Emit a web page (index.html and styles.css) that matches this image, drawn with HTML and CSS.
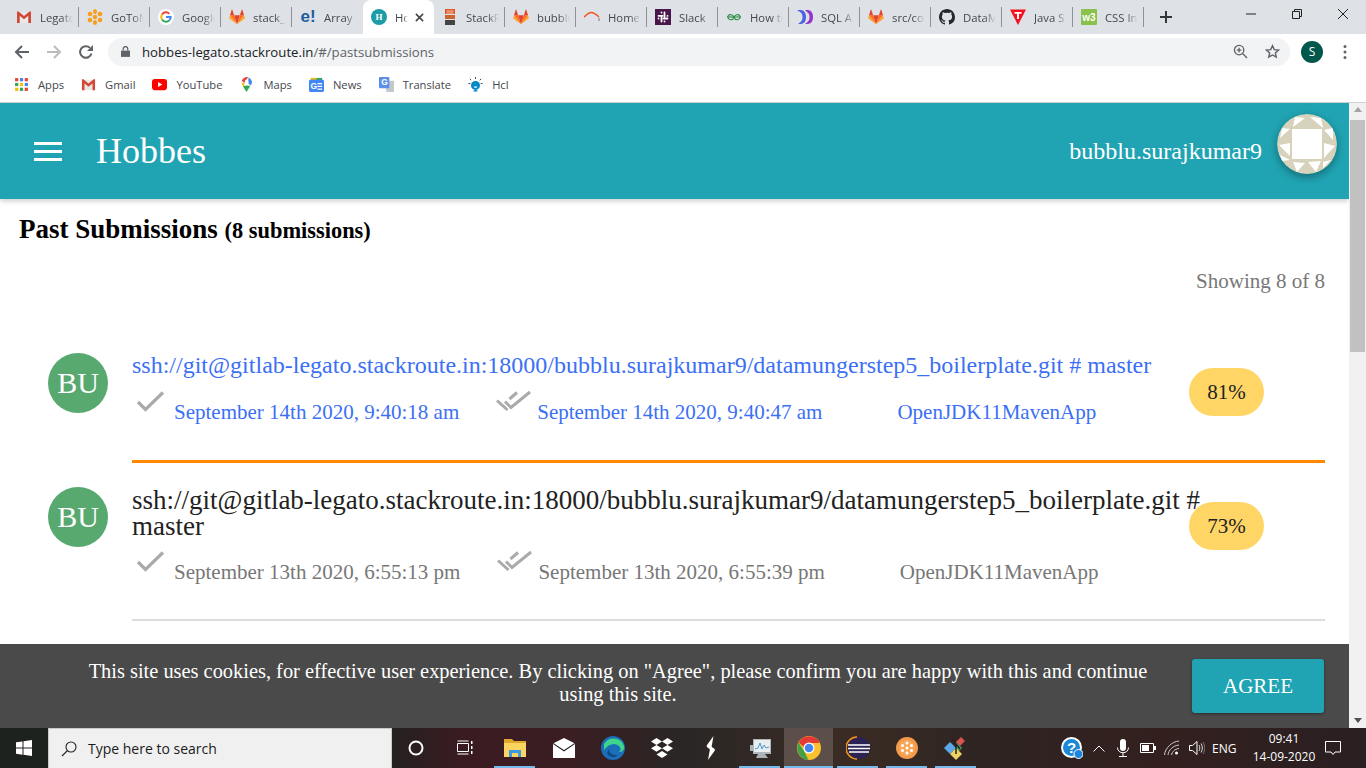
FILE: index.html
```html
<!DOCTYPE html>
<html lang="en">
<head>
<meta charset="utf-8">
<title>Hobbes</title>
<link rel="stylesheet" href="styles.css">
</head>
<body>
<svg class="defs" aria-hidden="true">
  <symbol id="fox" viewBox="0 0 16 16">
    <path fill="#e24329" d="M8 15.2 10.9 6.2H5.1z"/>
    <path fill="#fc6d26" d="M8 15.2 5.1 6.2H1z"/>
    <path fill="#fca326" d="M1 6.2.2 8.9c-.1.3 0 .5.2.7L8 15.2z"/>
    <path fill="#e24329" d="M1 6.2h4.1L3.3.8c-.1-.3-.5-.3-.6 0z"/>
    <path fill="#fc6d26" d="M8 15.2 10.9 6.2H15z"/>
    <path fill="#fca326" d="M15 6.2l.8 2.7c.1.3 0 .5-.2.7L8 15.2z"/>
    <path fill="#e24329" d="M15 6.2h-4.1L12.7.8c.1-.3.5-.3.6 0z"/>
  </symbol>
  <symbol id="gmail" viewBox="0 0 16 16">
    <path fill="#e8e8e8" d="M1 3h14v11H1z"/>
    <path fill="#d14836" d="M1 2.500h1.500L8 7l5.500-4.500H15V14h-2.700V6.800L8 10.300 3.700 6.800V14H1z"/>
  </symbol>
  <symbol id="check" viewBox="0 0 30 24">
    <path fill="none" stroke="#aaa" stroke-width="3.200" d="M3 12 10.500 19.500 28 2.500"/>
  </symbol>
  <symbol id="dcheck" viewBox="0 0 36 24">
    <path fill="none" stroke="#aaa" stroke-width="3" d="M1 10.500 11.500 20M9 11.500l6 6L34 2M13.500 9l7.500-6.500"/>
  </symbol>
</svg>

<div class="tabstrip">
  <div class="tab"><svg class="fav"><use href="#gmail"/></svg><span class="tabname">Legato</span></div>
  <div class="tab">
    <svg class="fav" viewBox="0 0 16 16"><g fill="#f99d1c"><circle cx="8" cy="8" r="2.200"/><ellipse cx="8" cy="2.500" rx="2" ry="2.500"/><ellipse cx="8" cy="13.500" rx="2" ry="2.500"/><circle cx="3" cy="5" r="2.300"/><circle cx="13" cy="5" r="2.300"/><circle cx="3" cy="11" r="2.300"/><circle cx="13" cy="11" r="2.300"/></g></svg>
    <span class="tabname">GoToMeeting</span></div>
  <div class="tab">
    <svg class="fav" viewBox="0 0 16 16"><circle cx="8" cy="8" r="8" fill="#fff"/><path fill="none" stroke="#ea4335" stroke-width="2" d="M11.300 4.700A4.700 4.700 0 0 0 4 5.500"/><path fill="none" stroke="#fbbc05" stroke-width="2" d="M4 5.500a4.700 4.700 0 0 0 0 5"/><path fill="none" stroke="#34a853" stroke-width="2" d="M4 10.500a4.700 4.700 0 0 0 7.300.9"/><path fill="none" stroke="#4285f4" stroke-width="2" d="M11.300 11.400A4.700 4.700 0 0 0 12.700 8H8"/></svg>
    <span class="tabname">Google</span></div>
  <div class="tab"><svg class="fav"><use href="#fox"/></svg><span class="tabname">stack_route</span></div>
  <div class="tab"><span class="fav favtext favE">e!</span><span class="tabname">Array</span></div>
  <div class="tab tab-active"><span class="fav favtext favH">H</span><span class="tabname tabshort">Hobbes</span>
    <svg class="tabx" viewBox="0 0 10 10"><path stroke="#45484d" stroke-width="1.800" d="M1 1l8 8M9 1 1 9"/></svg></div>
  <div class="tab">
    <svg class="fav" viewBox="0 0 16 16"><path fill="#e2552b" d="M3 0h10v5H3z"/><path fill="#f2c9a8" d="M4.500 1.500h7v1h-7zM4.500 3.500h7v1h-7z"/><path fill="#c9652f" d="M3 6h10v4H3z"/><path fill="#444" d="M3 11h10v5H3z"/></svg>
    <span class="tabname">StackRoute</span></div>
  <div class="tab"><svg class="fav"><use href="#fox"/></svg><span class="tabname">bubblu</span></div>
  <div class="tab">
    <svg class="fav" viewBox="0 0 16 16"><path fill="none" stroke="#f4511e" stroke-width="1.400" d="M0 8C2 7 3.500 3.500 7 3.500S13 6 15 8"/><path fill="none" stroke="#888" stroke-width="1.200" d="M15 9v3"/></svg>
    <span class="tabname">Home</span></div>
  <div class="tab">
    <svg class="fav" viewBox="0 0 16 16"><rect width="16" height="16" fill="#4a154b"/><g stroke="#fff" stroke-width="1.800" stroke-linecap="round"><path d="M3.500 6.800h4M6.500 3.500v.1M9.500 3.500v4M12.500 6.800v.1M8.500 9.500h4M9.500 12.500v.1M6.500 8.500v4M3.500 9.500v.1"/></g></svg>
    <span class="tabname">Slack</span></div>
  <div class="tab">
    <svg class="fav" viewBox="0 0 16 16"><g fill="none" stroke="#2f8d46" stroke-width="1.100"><path d="M1 8h14"/><path d="M7.800 8C7 5.500 3.500 5 2.300 6.500S2.500 11 5 10.800 7.500 9.500 7.800 8"/><path d="M8.200 8C9 5.500 12.500 5 13.700 6.500S13.500 11 11 10.800 8.500 9.500 8.200 8"/></g></svg>
    <span class="tabname">How to</span></div>
  <div class="tab">
    <svg class="fav" viewBox="0 0 16 16"><path fill="#4b63e0" d="M0 1h3.500C8 1 9 5 9 8s-1 7-5.500 7H1l2.500-2C5 12 5.500 10 5.500 8S5 4 3 3z"/><path fill="#9333c9" d="M8 1h2.500C15 1 16 5 16 8s-1 7-5.500 7H8l2.500-2c1.500-1 2-3 2-5s-.5-4-2.500-5z"/></svg>
    <span class="tabname">SQL A</span></div>
  <div class="tab"><svg class="fav"><use href="#fox"/></svg><span class="tabname">src/com</span></div>
  <div class="tab">
    <svg class="fav" viewBox="0 0 16 16"><path fill="#24292e" d="M8 0C3.600 0 0 3.600 0 8c0 3.500 2.300 6.500 5.500 7.600.4.100.5-.2.500-.4v-1.400c-2.200.5-2.700-1-2.700-1-.4-.9-.9-1.200-.9-1.200-.7-.5.100-.5.100-.5.800.1 1.200.8 1.200.8.700 1.200 1.900.9 2.300.7.100-.5.300-.9.500-1.100-1.800-.2-3.600-.9-3.600-4 0-.9.300-1.600.8-2.100-.1-.2-.4-1 .1-2.100 0 0 .7-.2 2.200.8a7.600 7.600 0 0 1 4 0c1.500-1 2.200-.8 2.200-.8.400 1.100.2 1.900.1 2.100.5.600.8 1.300.8 2.100 0 3.100-1.900 3.700-3.700 3.900.3.300.6.800.6 1.500v2.200c0 .2.100.5.600.4A8 8 0 0 0 16 8c0-4.400-3.600-8-8-8z"/></svg>
    <span class="tabname">DataM</span></div>
  <div class="tab">
    <svg class="fav" viewBox="0 0 16 16"><path fill="#f4101c" d="M0 .5h16L8 16z"/><path fill="#fff" d="M4.500 3h7v1.800H9V10H7V4.800H4.500z"/></svg>
    <span class="tabname">Java S</span></div>
  <div class="tab"><span class="fav favtext favW">w3</span><span class="tabname">CSS In</span></div>
  <svg class="newtab" viewBox="0 0 12 12"><path stroke="#35363a" stroke-width="2" d="M6 0v12M0 6h12"/></svg>
  <div class="winbtns">
    <svg class="winbtn" viewBox="0 0 12 12"><path stroke="#222" d="M1 6h10"/></svg>
    <svg class="winbtn" viewBox="0 0 12 12"><path fill="none" stroke="#222" d="M1.500 3.500h7v7h-7zM3.500 3.500v-2h7v7h-2"/></svg>
    <svg class="winbtn" viewBox="0 0 12 12"><path stroke="#222" d="M1 1l10 10M11 1 1 11"/></svg>
  </div>
</div>

<div class="toolbar">
  <svg class="navbtn" viewBox="0 0 16 16"><path fill="none" stroke="#5f6368" stroke-width="2" d="M15 8H2M8 2 2 8l6 6"/></svg>
  <svg class="navbtn" viewBox="0 0 16 16"><path fill="none" stroke="#babcbe" stroke-width="2" d="M1 8h13M8 2l6 6-6 6"/></svg>
  <svg class="navbtn" viewBox="0 0 16 16"><path fill="none" stroke="#5f6368" stroke-width="2" d="M13.500 9.500A5.800 5.800 0 1 1 12 3.900"/><path fill="#5f6368" d="M15 1v6H9z"/></svg>
  <div class="omnibox">
    <svg class="lock" viewBox="0 0 10 12"><path fill="#5f6368" d="M0 5h10v7H0z"/><path fill="none" stroke="#5f6368" stroke-width="1.400" d="M2.500 5V3a2.500 2.500 0 0 1 5 0v2"/></svg>
    <span class="url">hobbes-legato.stackroute.in<span class="urlpath">/#/pastsubmissions</span></span>
    <svg class="omniicon zoomicon" viewBox="0 0 16 16"><g fill="none" stroke="#5f6368" stroke-width="1.400"><circle cx="6.500" cy="6.500" r="5"/><path d="M10.200 10.200 15 15M6.500 4v5M4 6.500h5"/></g></svg>
    <svg class="omniicon" viewBox="0 0 16 16"><path fill="none" stroke="#5f6368" stroke-width="1.500" d="M8 1.800l1.900 4.200 4.500.5-3.400 3 1 4.500-4-2.300-4 2.300 1-4.500-3.400-3 4.500-.5z"/></svg>
  </div>
  <span class="profile">S</span>
  <svg class="kebab" viewBox="0 0 4 16"><g fill="#5f6368"><circle cx="2" cy="2.500" r="1.500"/><circle cx="2" cy="8" r="1.500"/><circle cx="2" cy="13.500" r="1.500"/></g></svg>
</div>

<div class="bookmarks">
  <span class="bm bm-apps">
    <svg class="bmicon" viewBox="0 0 14 14"><g><path fill="#ea4335" d="M1 1h3v3H1z"/><path fill="#4285f4" d="M5.500 1h3v3h-3z"/><path fill="#ea4335" d="M10 1h3v3h-3z"/><path fill="#34a853" d="M1 5.500h3v3H1z"/><path fill="#fbbc05" d="M5.500 5.500h3v3h-3z"/><path fill="#4285f4" d="M10 5.500h3v3h-3z"/><path fill="#fbbc05" d="M1 10h3v3H1z"/><path fill="#34a853" d="M5.500 10h3v3h-3z"/><path fill="#ea4335" d="M10 10h3v3h-3z"/></g></svg>Apps</span>
  <span class="bm"><svg class="bmicon"><use href="#gmail"/></svg>Gmail</span>
  <span class="bm"><svg class="bmicon" viewBox="0 0 16 16"><rect y="2" width="16" height="12" rx="3" fill="#f00"/><path fill="#fff" d="M6.500 5.300 11 8l-4.500 2.700z"/></svg>YouTube</span>
  <span class="bm"><svg class="bmicon" viewBox="0 0 16 16"><path fill="#34a853" d="M8 16 4 9.500 9 9l3 .5z"/><path fill="#fbbc05" d="M3.500 8.500C3 7.500 2.800 7 2.800 6L6 7l-1 3z"/><path fill="#ea4335" d="M3 4a5.300 5.300 0 0 1 7-3.500L6.500 4 6 7z"/><path fill="#4285f4" d="M10 .5A5.300 5.300 0 0 1 12.500 9L10 7z"/><circle cx="8" cy="5.500" r="2" fill="#fff"/></svg>Maps</span>
  <span class="bm"><svg class="bmicon" viewBox="0 0 16 16"><path fill="#34a853" d="M2 1h12v4H2z"/><path fill="#fbbc05" d="M2 1h6v2H2z"/><rect y="3" width="16" height="13" rx="1.500" fill="#4285f4"/><path stroke="#fff" stroke-width="1.300" d="M9 7h5M9 10h5M9 13h5"/><text class="gnews" x="1.500" y="12.500">G</text></svg>News</span>
  <span class="bm"><svg class="bmicon" viewBox="0 0 16 16"><path fill="#c4c7cc" d="M6 4h10v12H8z"/><rect width="11" height="12" rx="1" fill="#5c8fea"/><text class="gnews" x="2.500" y="9">G</text></svg>Translate</span>
  <span class="bm"><svg class="bmicon" viewBox="0 0 16 16"><circle cx="8" cy="9" r="4.800" fill="#0288c9"/><path fill="#fff" d="M6 10h4l-.8 1.500H6.800z"/><path fill="#0288c9" d="M6 14h4v1.500H6z"/><path stroke="#333" stroke-dasharray="2 1" d="M8 0v2.500M2 2l2 2M14 2l-2 2M.5 7H2.500M13.500 7h2"/></svg>Hcl</span>
</div>

<div class="viewport">
  <main class="page">
    <header class="appbar">
      <div class="burger"><i></i><i></i><i></i></div>
      <span class="brand">Hobbes</span>
      <span class="username">bubblu.surajkumar9</span>
      <svg class="useravatar" viewBox="0 0 60 60">
        <circle cx="30" cy="30" r="30" fill="#d6d2bb"/>
        <g fill="#fff">
          <path d="M18 3 28 4 16 13zM33 3 44 4 46 14zM5 14 13 15 3 24zM47 16 56 14 56 26z"/>
          <path d="M2 31 13 29 13 42zM47 29 58 32 47 44zM3 41 13 46 5 47zM16 48 28 49 20 58z"/>
          <path d="M31 48 44 47 39 58zM46 48 54 46 46 54zM15 15h30v30H15z"/>
        </g>
      </svg>
    </header>
    <section class="content">
      <h1 class="heading">Past Submissions <small class="count">(8 submissions)</small></h1>
      <p class="showing">Showing 8 of 8</p>
      <article class="sub sub-first">
        <span class="avatar">BU</span>
        <div class="subbody">
          <div class="subtitle">ssh://git@gitlab-legato.stackroute.in:18000/bubblu.surajkumar9/datamungerstep5_boilerplate.git # master</div>
          <div class="meta">
            <svg class="ic-check"><use href="#check"/></svg><span class="date">September 14th 2020, 9:40:18 am</span>
            <svg class="ic-dcheck"><use href="#dcheck"/></svg><span class="date date2">September 14th 2020, 9:40:47 am</span>
            <span class="runner">OpenJDK11MavenApp</span>
          </div>
        </div>
        <span class="score">81%</span>
      </article>
      <article class="sub sub-second">
        <span class="avatar">BU</span>
        <div class="subbody">
          <div class="subtitle">ssh://git@gitlab-legato.stackroute.in:18000/bubblu.surajkumar9/datamungerstep5_boilerplate.git # master</div>
          <div class="meta">
            <svg class="ic-check"><use href="#check"/></svg><span class="date">September 13th 2020, 6:55:13 pm</span>
            <svg class="ic-dcheck"><use href="#dcheck"/></svg><span class="date date2">September 13th 2020, 6:55:39 pm</span>
            <span class="runner">OpenJDK11MavenApp</span>
          </div>
        </div>
        <span class="score">73%</span>
      </article>
    </section>
  </main>
  <div class="scrollbar">
    <span class="arrow arrow-up"></span>
    <span class="thumb"></span>
    <span class="arrow arrow-down"></span>
  </div>
  <div class="cookie">
    <p class="cookietext">This site uses cookies, for effective user experience. By clicking on "Agree", please confirm you are happy with this and continue using this site.</p>
    <button class="agree">AGREE</button>
  </div>
</div>

<footer class="taskbar">
  <span class="tb tb-start"><svg viewBox="0 0 16 16" class="win"><path fill="#fff" d="M0 2.300 6.500 1.400v6.200H0zM7.500 1.200 16 0v7.600H7.500zM0 8.500h6.500v6.200L0 13.800zM7.500 8.500H16V16l-8.500-1.200z"/></svg></span>
  <div class="search">
    <svg class="searchicon" viewBox="0 0 16 16"><g fill="none" stroke="#222" stroke-width="1.100"><circle cx="10" cy="6" r="5"/><path d="M6.500 9.500 1 15"/></g></svg>
    <span class="searchtext">Type here to search</span>
  </div>
  <div class="tbicons">
    <span class="tb"><svg class="tbi16" viewBox="0 0 16 16"><circle cx="8" cy="8" r="6.500" fill="none" stroke="#fff" stroke-width="2"/></svg></span>
    <span class="tb tb-wide"><svg class="tbi16" viewBox="0 0 16 16"><path fill="none" stroke="#fff" d="M.5 3.500h11v8H.5zM.5 1h11M.5 14h11"/><path fill="#fff" d="M14 1h1.500v3H14zM14 6h1.500v3H14zM14 11h1.500v3H14z"/></svg></span>
    <span class="tb tb-open"><svg class="tbi22" viewBox="0 0 22 22"><path fill="#e0a92e" d="M0 2h8l2 2h12v16H0z"/><path fill="#fcd462" d="M0 6h22v14H0z"/><path fill="#3d9ae0" d="M5 13h12v7h-3v-4H8v4H5z"/></svg></span>
    <span class="tb"><svg class="tbi22" viewBox="0 0 24 22"><path fill="#fff" d="M0 6 12 0l12 6v16H0z"/><path fill="none" stroke="#2b2023" stroke-width="1.200" d="M0 6l12 8 12-8"/></svg></span>
    <span class="tb"><svg class="tbi24" viewBox="0 0 24 24"><circle cx="12" cy="12" r="12" fill="#1b6fb9"/><path fill="#3fd48c" d="M3 8a11 11 0 0 1 20 2c1 4-2 6-5 6 3-2 2-7-5-8-4 0-7 2-10 6z"/><path fill="#0c4a8a" d="M8 13c0 4 4 7 9 6-3 3-9 3-11-2z"/></svg></span>
    <span class="tb"><svg class="tbi22" viewBox="0 0 24 22"><path fill="#fff" d="M6 0l6 3.800L6 7.600 0 3.800zM18 0l6 3.800-6 3.800-6-3.800zM0 11.400l6-3.800 6 3.800-6 3.800zM12 11.400l6-3.800 6 3.800-6 3.800zM6 18.200l6-3.800 6 3.800L12 22z"/></svg></span>
    <span class="tb"><svg class="tbi24" viewBox="0 0 12 24"><path fill="#fff" d="M8.500 0 2 9c-1 1.500 0 2.300 2 3.500 1 .8 1 1.500.5 3L3 24l6.500-9c1-1.500 0-2.500-2-3.500-1-.8-1-1.500-.5-3z"/></svg></span>
    <span class="tb tb-open"><svg class="tbi24" viewBox="0 0 24 24"><path fill="#aeb6ba" d="M5 3h18v15H5z"/><path fill="#e8eef0" d="M6 4h16v12H6z"/><path fill="none" stroke="#4f97c9" d="M7 13l3-1 2-5 2 6 2-4 2 3 3-1"/><path fill="#a9b1b5" d="M2 9h3v6H2zM10 18h7l3 4H8z"/></svg></span>
    <span class="tb tb-open tb-active"><svg class="tbi24" viewBox="0 0 24 24"><circle cx="12" cy="12" r="12" fill="#fbc02d"/><path fill="#e53935" d="M1.600 6.500A12 12 0 0 1 22.800 7H12a5 5 0 0 0-5 4z"/><path fill="#43a047" d="M1.600 6.500 7 15l4.500 9A12 12 0 0 1 1.600 6.500z"/><circle cx="12" cy="12" r="5.500" fill="#fff"/><circle cx="12" cy="12" r="4.300" fill="#4285f4"/></svg></span>
    <span class="tb tb-open"><svg class="tbi24" viewBox="0 0 24 24"><circle cx="13" cy="12" r="11" fill="#2c2255"/><path fill="none" stroke="#f7941e" stroke-width="1.500" d="M11 1A11 11 0 0 0 11 23"/><path stroke="#fff" stroke-width="1.700" d="M2 9h22M2 12.500h22M3 16h20"/></svg></span>
    <span class="tb tb-open"><svg class="tbi22" viewBox="0 0 22 22"><circle cx="11" cy="11" r="11" fill="#f29a4a"/><circle cx="11" cy="11" r="8" fill="#f6a757"/><g fill="#fff"><circle cx="11" cy="11" r="1.500"/><circle cx="11" cy="6" r="1.500"/><circle cx="11" cy="16" r="1.500"/><circle cx="6.500" cy="8.500" r="1.500"/><circle cx="15.500" cy="8.500" r="1.500"/><circle cx="6.500" cy="13.500" r="1.500"/><circle cx="15.500" cy="13.500" r="1.500"/></g></svg></span>
    <span class="tb tb-open"><svg class="tbi24" viewBox="0 0 24 24"><path fill="#d9534f" d="M12 6l5-5 4 4-5 5z"/><path fill="#5ca7e6" d="M0 12l6-6 6 6-6 6z"/><path fill="#4aa564" d="M12 6l6 6-6 6z"/><path fill="#f0d264" d="M6 18l6-6 6 6-6 6z"/><path stroke="#222" stroke-width="1.500" d="M8 3l8 10M12 8v10"/></svg></span>
  </div>
  <div class="tray">
    <span class="tr tr-help"><svg viewBox="0 0 22 22" class="help"><circle cx="10.500" cy="10.500" r="10.500" fill="#fff"/><circle cx="10.500" cy="10.500" r="8.500" fill="#1c86d8"/><text class="helpq" x="10.500" y="16">?</text><circle cx="17.500" cy="17" r="4.500" fill="#1c86d8" stroke="#fff"/></svg></span>
    <span class="tr"><svg viewBox="0 0 12 7" class="chev"><path fill="none" stroke="#fff" d="M.5 6.500 6 1l5.500 5.500"/></svg></span>
    <span class="tr"><svg viewBox="0 0 12 18" class="mic"><rect x="3" width="6" height="12" rx="3" fill="#fff"/><path fill="none" stroke="#fff" d="M.5 8.500c0 7 11 7 11 0M6 14v3.500M2 17.500h8"/></svg></span>
    <span class="tr"><svg viewBox="0 0 16 10" class="batt"><path fill="none" stroke="#fff" d="M.5.500h13v9H.5z"/><path fill="#fff" d="M2 2h7v6H2zM14 3h2v4h-2z"/></svg></span>
    <span class="tr"><svg viewBox="0 0 16 16" class="wifi"><g fill="none" stroke="#ccc"><path d="M.5 15C1 8 8 1.500 15 1"/><path d="M4 15c.5-5 5-9.500 11-10"/><path d="M7.500 15c.5-3 3-6 7.500-6.500"/></g><circle cx="12.500" cy="13" r="1.500" fill="#fff"/></svg></span>
    <span class="tr"><svg viewBox="0 0 16 16" class="vol"><path fill="none" stroke="#fff" d="M.5 5.500h3L8 1.500v13l-4.500-4h-3z"/><path fill="none" stroke="#ddd" d="M10 5c1 2 1 4 0 6M12 3.500c1.800 3 1.800 6 0 9"/><path fill="none" stroke="#777" d="M14 2c2.300 4 2.300 8 0 12"/></svg></span>
    <span class="tr-lang">ENG</span>
    <span class="clock"><span>09:41</span><span>14-09-2020</span></span>
    <span class="tr tr-notif"><svg viewBox="0 0 16 16" class="notif"><path fill="none" stroke="#fff" d="M.5 1.500h15v10.500H10l-2 2.500-2-2.500H.5z"/></svg></span>
  </div>
</footer>
</body>
</html>
```
FILE: styles.css
```css
* { box-sizing: border-box; }
html, body { margin: 0; height: 768px; overflow: hidden; background: #fff; }
body { display: flex; flex-direction: column; font-family: "Liberation Serif", "Times New Roman", serif; }
.defs { display: none; }
svg { display: block; flex: none; }

/* browser chrome */
.tabstrip { height: 34px; flex: none; background: #dee1e6; display: flex; align-items: center; padding-left: 8px; font: 11.300px "Open Sans", "Noto Sans", sans-serif; color: #45484d; }
.tab { width: 71px; height: 34px; flex: none; display: flex; align-items: center; padding: 0 0 0 8px; position: relative; }
.tab::after { content: ""; position: absolute; right: 0; top: 7px; height: 20px; width: 1px; background: #8f9296; }
.tab-active { background: #fff; border-radius: 8px 8px 0 0; }
.tab-active::after { display: none; }
.tab:has(+ .tab-active)::after { display: none; }
.fav { width: 16px; height: 16px; flex: none; }
.favtext { display: flex; align-items: center; justify-content: center; font-family: "Liberation Sans", sans-serif; font-weight: 700; }
.favE { color: #1f5c9e; font-size: 17px; }
.favH { background: #1d9ca8; color: #fff; border-radius: 50%; font: 700 9px "Liberation Serif", serif; }
.favW { background: #8ac249; color: #fff; font-size: 10px; border-radius: 1px; }
.tabname { margin-left: 8px; width: 33px; overflow: hidden; white-space: nowrap; -webkit-mask-image: linear-gradient(90deg, #000 65%, transparent); mask-image: linear-gradient(90deg, #000 65%, transparent); }
.tabshort { width: 13px; }
.tabx { width: 9px; height: 9px; margin-left: 7px; }
.newtab { width: 12px; height: 12px; margin-left: 16px; }
.winbtns { margin-left: auto; align-self: flex-start; display: flex; gap: 34px; padding: 8px 17px 0 0; }
.winbtn { width: 12px; height: 12px; }

.toolbar { height: 35px; flex: none; background: #fff; display: flex; align-items: center; padding-left: 14px; }
.navbtn { width: 16px; height: 16px; margin-right: 16px; }
.omnibox { width: 1182px; margin-left: -2px; height: 28px; background: #f1f3f4; border-radius: 14px; display: flex; align-items: center; padding: 0 10px 0 13px; font: 13.200px "Open Sans", "Noto Sans", sans-serif; }
.lock { width: 9px; height: 11px; }
.url { margin-left: 12px; color: #202124; }
.urlpath { color: #5f6368; }
.omniicon { width: 15px; height: 15px; }
.zoomicon { margin-left: auto; margin-right: 17px; }
.profile { width: 22px; height: 22px; margin-left: 11px; border-radius: 50%; background: #00574b; color: #fff; font: 12px "Open Sans", sans-serif; display: flex; align-items: center; justify-content: center; }
.kebab { width: 4px; height: 16px; margin-left: 20px; }

.bookmarks { height: 34px; flex: none; background: #fff; border-bottom: 1px solid #cfd0d1; display: flex; align-items: center; padding: 0 0 3px 14px; gap: 17px; font: 11.200px "Open Sans", "Noto Sans", sans-serif; color: #45484d; }
.bm { display: flex; align-items: center; gap: 9px; white-space: nowrap; }
.bmicon { width: 15px; height: 15px; }
.gnews { font: 700 9px "Liberation Sans", sans-serif; fill: #fff; }

/* app */
.viewport { flex: 1; position: relative; display: flex; min-height: 0; overflow: hidden; }
.page { flex: 1; min-width: 0; overflow: hidden; }
.appbar { height: 96px; background: #20a4b3; display: flex; align-items: center; padding: 0 12px 0 34px; color: #fff; box-shadow: 0 2px 5px rgba(0,0,0,.2); position: relative; }
.burger { width: 28px; display: flex; flex-direction: column; gap: 5px; }
.burger i { display: block; height: 3px; background: #fff; }
.brand { font-size: 36px; margin-left: 34px; }
.username { font-size: 24px; margin-left: auto; }
.useravatar { width: 60px; height: 60px; margin-left: 15px; border-radius: 50%; box-shadow: 0 3px 8px rgba(0,0,0,.35); position: relative; top: -7px; }

.content { padding: 14px 24px 0 19px; }
.heading { margin: 0; font-size: 27px; line-height: 32px; color: #000; }
.count { font-size: 22.400px; }
.showing { margin: 21px 0 0 0; text-align: right; font-size: 21px; line-height: 26px; color: #777; }
.sub { display: flex; margin-top: 0; padding-left: 29px; position: relative; }
.sub-first { margin-top: 59px; }
.sub-second { margin-top: 24px; }
.avatar { width: 60px; height: 60px; flex: none; border-radius: 50%; background: #57a96f; color: #fff; font-size: 30px; display: flex; align-items: center; justify-content: center; }
.subbody { flex: 1; min-width: 0; margin-left: 24px; border-bottom: 3px solid #ff8800; padding-bottom: 35px; }
.subtitle { font-size: 24px; line-height: 24px; color: #3b6ff5; padding-right: 125px; }
.sub-second .subbody { border-bottom: 2px solid #ddd; padding-bottom: 34px; }
.sub-second .subtitle { font-size: 27px; line-height: 26px; color: #222; padding-right: 124px; }
.meta { display: flex; align-items: flex-start; margin-top: 15px; font-size: 21px; color: #3b6ff5; }
.sub-second .meta { color: #777; margin-top: 13px; }
.ic-check { width: 30px; height: 24px; margin: -2px 0 0 3px; }
.ic-dcheck { width: 36px; height: 24px; margin: -2px 0 0 37px; }
.date { margin: 8px 0 0 9px; }
.date2 { margin-left: 5px; }
.runner { margin: 8px 0 0 75px; }
.score { position: absolute; right: 61px; top: 15px; width: 75px; height: 48px; border-radius: 24px; background: #ffd666; color: #222; font-size: 21px; display: flex; align-items: center; justify-content: center; }

.scrollbar { width: 17px; flex: none; background: #f1f1f1; display: flex; flex-direction: column; align-items: center; }
.arrow { width: 0; height: 0; border: 4px solid transparent; margin: 4px 0; }
.arrow-up { border-bottom: 5px solid #a3a3a3; border-top: 0; }
.arrow-down { border-top: 5px solid #505050; border-bottom: 0; margin-top: auto; margin-bottom: 5px; }
.thumb { width: 15px; height: 232px; background: #c1c1c1; margin-top: 4px; }

.cookie { position: absolute; left: 0; right: 17px; bottom: 0; height: 84px; background: #4a4a4a; color: #fff; display: flex; align-items: center; padding: 0 25px 0 78px; }
.cookietext { margin: 0 0 7px; width: 1080px; text-align: center; font-size: 20.400px; line-height: 23px; }
.agree { margin-left: auto; width: 132px; height: 54px; border: 0; border-radius: 3px; background: #20a4b3; color: #fff; font: 21px "Liberation Serif", serif; box-shadow: 0 1px 3px rgba(0,0,0,.4); }

/* taskbar */
.taskbar { height: 40px; flex: none; display: flex; align-items: center; background: linear-gradient(90deg, #1d221f 0, #22211f 28%, #3a1b22 34%, #3a1e22 42%, #2a2625 50%, #3a2c24 62%, #2e2422 72%, #33201e 85%, #2a1f22 100%); color: #fff; }
.tb { width: 49px; height: 40px; flex: none; display: flex; align-items: center; justify-content: center; position: relative; }
.tb-start { width: 48px; }
.tb-wide { width: 50px; }
.win { width: 16px; height: 16px; }
.search { width: 344px; height: 40px; background: #f0f0f0; border: 1px solid #c9c9c9; border-width: 1px 1px 0; display: flex; align-items: center; padding-left: 12px; color: #1b1b1b; font: 14px "Open Sans", "Noto Sans", sans-serif; }
.searchicon { width: 16px; height: 16px; }
.searchtext { margin-left: 11px; }
.tbicons { display: flex; margin-left: -1px; }
.tb-open::after { content: ""; position: absolute; left: 4px; right: 4px; bottom: 0; height: 2px; background: #76b9ed; }
.tb-active { background: #5c4f49; }
.tb-active::after { left: 0; right: 0; }
.tbi16 { width: 16px; height: 16px; }
.tbi22 { width: 22px; height: 22px; }
.tbi24 { width: 24px; height: 24px; }
.tray { margin-left: auto; display: flex; align-items: center; font: 12px "Open Sans", "Noto Sans", sans-serif; }
.tr { width: 24.500px; display: flex; align-items: center; justify-content: center; }
.tr-help { width: 24px; margin-right: 3px; }
.help { width: 22px; height: 22px; }
.helpq { font: 700 15px "Liberation Sans", sans-serif; fill: #fff; text-anchor: middle; }
.chev { width: 12px; height: 7px; }
.mic { width: 12px; height: 18px; }
.batt { width: 16px; height: 10px; }
.wifi { width: 16px; height: 16px; }
.vol { width: 16px; height: 16px; }
.tr-lang { margin-left: 3px; width: 33px; }
.clock { width: 70px; margin-left: 4px; display: flex; flex-direction: column; align-items: center; line-height: 18px; }
.tr-notif { width: 16px; margin: 0 25px 0 6px; }
.notif { width: 16px; height: 16px; }
```
